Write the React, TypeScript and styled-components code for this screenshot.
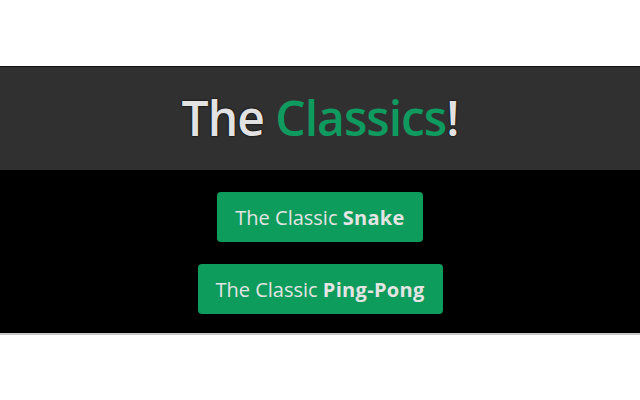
import styled, { createGlobalStyle } from 'styled-components';

const GlobalStyle = createGlobalStyle`
  html, body {
    margin: 0;
    padding: 0;
    background: #fff;
  }
  body {
    font-family: "Open Sans", "Noto Sans", sans-serif;
  }
`;

const App: React.FC = () => {
  const games = [
    { key: 'snake', name: 'Snake' },
    { key: 'pong', name: 'Ping-Pong' },
  ];

  return (
    <>
      <GlobalStyle />
      <Page>
        <Header>
          <Title>
            The <Accent>Classics</Accent>!
          </Title>
        </Header>
        <Menu>
          {games.map((g) => (
            <GameButton key={g.key}>
              The Classic <strong>{g.name}</strong>
            </GameButton>
          ))}
        </Menu>
      </Page>
    </>
  );
};

const Page = styled.div`
  padding-top: 66px;
  min-height: 400px;
  box-sizing: border-box;
`;

const Header = styled.header`
  height: 104px;
  background-color: #303030;
  border-top: 1px solid #111;
  box-sizing: border-box;
  display: flex;
  align-items: center;
  justify-content: center;
`;

const Title = styled.h1`
  margin: 0 0 2px;
  font-size: 48px;
  font-weight: 600;
  color: #e2e2e2;
  letter-spacing: -1px;
  text-shadow: 0 0 2px #000, 0 0 1px #000;
`;

const Accent = styled.span`
  color: #0f9a5f;
  text-shadow: none;
`;

const Menu = styled.div`
  background-color: #000;
  padding: 22px 0 19px;
  border-bottom: 2px solid #c8c8c8;
  display: flex;
  flex-direction: column;
  align-items: center;
  gap: 22px;
`;

const GameButton = styled.button`
  font-family: "Open Sans", "Noto Sans", sans-serif;
  font-size: 20px;
  color: #e4e4e4;
  background-color: #0d9c5b;
  border: none;
  border-radius: 4px;
  height: 50px;
  padding: 0 18px;
  cursor: pointer;

  strong {
    font-weight: 700;
    letter-spacing: 0.3px;
  }
`;

export default App;
